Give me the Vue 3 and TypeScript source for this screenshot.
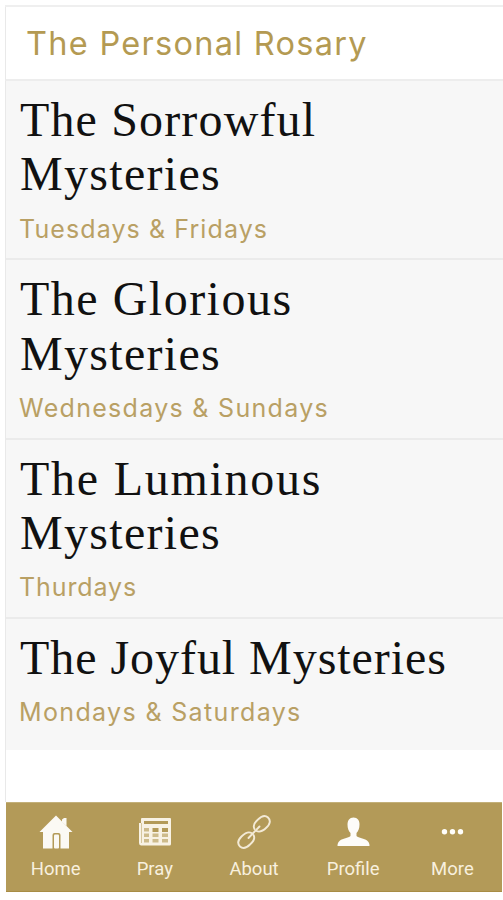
<script setup lang="ts">
interface Line {
  text: string
  spacing: number
}

interface Mystery {
  lines: Line[]
  days: string
  daysSpacing: number
}

type IconName = 'home' | 'pray' | 'about' | 'profile' | 'more'

const mysteries: Mystery[] = [
  {
    lines: [{ text: 'The Sorrowful', spacing: 1.15 }, { text: 'Mysteries', spacing: 1.3 }],
    days: 'Tuesdays & Fridays',
    daysSpacing: 1.1,
  },
  {
    lines: [{ text: 'The Glorious', spacing: 1.5 }, { text: 'Mysteries', spacing: 1.3 }],
    days: 'Wednesdays & Sundays',
    daysSpacing: 1.3,
  },
  {
    lines: [{ text: 'The Luminous', spacing: 1.75 }, { text: 'Mysteries', spacing: 1.3 }],
    days: 'Thurdays',
    daysSpacing: 0.9,
  },
  {
    lines: [{ text: 'The Joyful Mysteries', spacing: 0.95 }],
    days: 'Mondays & Saturdays',
    daysSpacing: 1.35,
  },
]

const tabs: { icon: IconName; label: string }[] = [
  { icon: 'home', label: 'Home' },
  { icon: 'pray', label: 'Pray' },
  { icon: 'about', label: 'About' },
  { icon: 'profile', label: 'Profile' },
  { icon: 'more', label: 'More' },
]
</script>

<template>
  <div class="screen">
    <header class="header"><h1>The Personal Rosary</h1></header>
    <main class="list">
      <section v-for="m in mysteries" :key="m.days" class="row">
        <h2 class="title">
          <span
            v-for="line in m.lines"
            :key="line.text"
            class="line"
            :style="{ letterSpacing: line.spacing + 'px' }"
          >{{ line.text }}</span>
        </h2>
        <p class="days" :style="{ letterSpacing: m.daysSpacing + 'px' }">{{ m.days }}</p>
      </section>
    </main>
    <nav class="tabs">
      <a v-for="tab in tabs" :key="tab.label" class="tab">
        <svg class="icon" viewBox="0 0 36 36">
          <g v-if="tab.icon === 'home'" fill="#fbf9f4">
            <path d="M18 1.5 34.5 18H31V34.500H22.500V21Q22.500 19 20.500 19H16.500Q14.500 19 14.500 21V34.500H5V18H1.500Z" />
            <path d="M24 5.500 26 4H28.500V12L24 8Z" />
            <rect x="16" y="20.500" width="5" height="14" rx="1" />
          </g>
          <g v-else-if="tab.icon === 'pray'">
            <path d="M5 4H33Q34 4 34 5V30Q34 31.500 32.500 31.500H4Q2 31 2 29V9H4V5Q4 4 5 4Z" fill="#f8f2e4" />
            <path d="M4.500 9V29" stroke="#cdbb8b" stroke-width=".8" />
            <rect x="7" y="7" width="24" height="3" fill="#b39a58" />
            <g fill="#b39a58">
              <rect x="15.500" y="14" width="6" height="4" />
              <rect x="25" y="14" width="6" height="4" />
            </g>
            <g fill="#cdbb8b">
              <rect x="7" y="14" width="5" height="3.500" />
              <rect x="7" y="19.500" width="5" height="3.500" />
              <rect x="15.500" y="19.500" width="6" height="3.500" />
              <rect x="25" y="19.500" width="6" height="3.500" />
              <rect x="7" y="25" width="5" height="3.500" />
              <rect x="15.500" y="25" width="6" height="3.500" />
              <rect x="25" y="25" width="6" height="3.500" />
            </g>
          </g>
          <g v-else-if="tab.icon === 'about'" fill="none" stroke="#f3ead6" stroke-width="1.900" stroke-linecap="round">
            <path d="M18.500 15C16.500 11.500 18.500 8.500 22 5.500C25.500 2 29 .8 32 3.500C35 6.500 34 10 30.500 13.500C27.500 16.500 24.500 19 20.500 17" />
            <path d="M17.500 21C19.500 24.500 17.500 27.500 14 30.500C10.500 34 7 35.200 4 32.500C1 29.500 2 26 5.500 22.500C8.500 19.500 11.500 17 15.500 19" />
            <path d="M12.500 24 23.500 12.500" />
          </g>
          <path
            v-else-if="tab.icon === 'profile'"
            fill="#fdfcf9"
            d="M18.500 3.500C22.500 3.500 24.500 6.500 24.500 10.500C24.500 14.500 23.300 17 21.500 19V22C23.500 24 29.500 24.500 32 26.500C34 28 34.500 29.500 34.500 32H2.500C2.500 29.500 3 28 5 26.500C7.500 24.500 13.500 24 15.500 22V19C13.700 17 12.500 14.500 12.500 10.500C12.500 6.500 14.500 3.500 18.500 3.500Z"
          />
          <g v-else fill="#fffefa">
            <circle cx="10.500" cy="17.800" r="2.700" />
            <circle cx="18.500" cy="17.800" r="2.700" />
            <circle cx="26.500" cy="17.800" r="2.700" />
          </g>
        </svg>
        <span class="label">{{ tab.label }}</span>
      </a>
    </nav>
  </div>
</template>

<style>
body {
  background: #fff;
}
</style>

<style scoped>
.screen {
  box-sizing: border-box;
  width: 498px;
  height: 887px;
  margin: 5px 0 0 5px;
  border-top: 2px solid #efefef;
  display: flex;
  flex-direction: column;
}
.header {
  box-sizing: border-box;
  height: 74px;
  padding-left: 20px;
  border-left: 1px solid #e9e9e9;
  border-bottom: 2px solid #ededed;
}
h1 {
  margin: 0;
  font: 400 32.500px/73px Inter, sans-serif;
  letter-spacing: 1.28px;
  color: #b49a52;
  white-space: nowrap;
}
.list {
  flex: 1;
  border-left: 1px solid #e9e9e9;
}
.row {
  box-sizing: border-box;
  height: 179.300px;
  padding: 12px 0 0 14px;
  background: #f7f7f7;
  border-bottom: 2px solid #ebebeb;
}
.row:last-child {
  height: 131px;
  border-bottom: 0;
}
.title {
  margin: 0;
  font: 400 48px/54.300px "Liberation Serif", serif;
  color: #111;
}
.line {
  display: block;
  white-space: nowrap;
}
.days {
  margin: 11px 0 0 -1px;
  font: 400 25px/32px Inter, sans-serif;
  color: #b9a064;
  white-space: nowrap;
}
.tabs {
  box-sizing: border-box;
  height: 90px;
  width: 496px;
  margin-left: 1px;
  display: flex;
  background: #b39a58;
  border-top: 1px solid #c3b079;
  border-bottom: 1px solid #a88d45;
}
.tab {
  flex: 1;
  display: flex;
  flex-direction: column;
  align-items: center;
  padding-top: 11px;
}
.icon {
  width: 36px;
  height: 36px;
}
.label {
  margin-top: 7px;
  font: 400 18.500px/24px Roboto, sans-serif;
  color: #f8f0df;
}
</style>
